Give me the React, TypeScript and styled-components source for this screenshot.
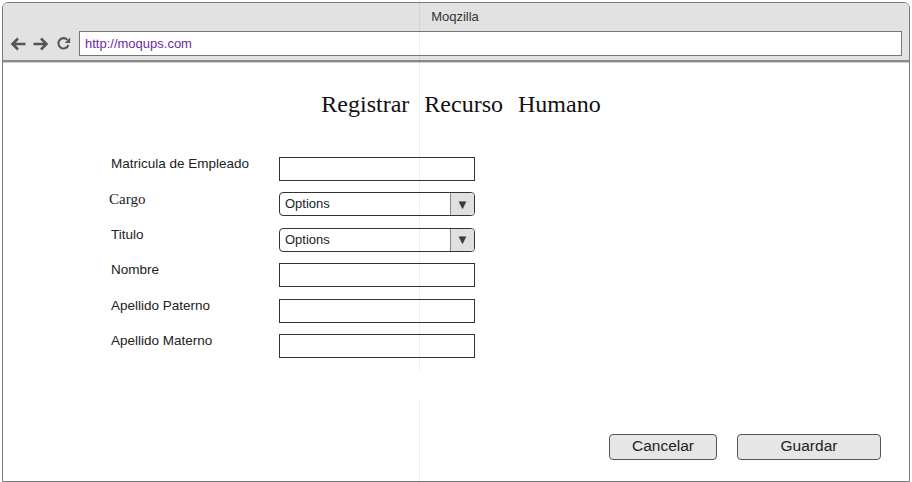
import styled, { createGlobalStyle } from "styled-components";

const GlobalStyle = createGlobalStyle`
  html, body {
    margin: 0;
    padding: 0;
    background: #ffffff;
  }
  body {
    font-family: "Liberation Sans", Arial, sans-serif;
    color: #222;
  }
`;

const Page = styled.div`
  position: relative;
  width: 912px;
  height: 482px;
  padding: 2px;
  box-sizing: border-box;
`;

const BrowserWindow = styled.div`
  height: 100%;
  border: 1px solid #7a7a7a;
  border-radius: 6px 6px 0 0;
  display: flex;
  flex-direction: column;
  overflow: hidden;
`;

const Header = styled.div`
  background: #e2e2e2;
  border-bottom: 2px solid #8a8a8a;
  box-shadow: 0 1px 0 #d0d0d0;
  padding: 0 7px 4px 5px;
  display: flex;
  flex-direction: column;
`;

const WindowTitle = styled.div`
  height: 28px;
  line-height: 28px;
  text-align: center;
  font-size: 13px;
  color: #333;
`;

const NavRow = styled.div`
  display: flex;
  align-items: center;
`;

const NavIcons = styled.div`
  display: flex;
  align-items: center;
  gap: 7px;
  width: 69px;
  padding-left: 2px;
  color: #555;
`;

const UrlBox = styled.div`
  flex: 1;
  height: 23px;
  background: #fff;
  border: 1px solid #777;
  display: flex;
  align-items: center;
  padding-left: 5px;
  font-size: 13px;
  color: #6b2aa8;
`;

const Content = styled.div`
  flex: 1;
  display: flex;
  flex-direction: column;
  padding: 29px 28px 21px 0;
`;

const PageTitle = styled.h1`
  margin: 0;
  text-align: center;
  padding-left: 38px;
  font-family: "Liberation Serif", "DejaVu Serif", serif;
  font-weight: normal;
  font-size: 24px;
  line-height: 26px;
  word-spacing: 9px;
  color: #111;
`;

const Form = styled.div`
  margin-top: 40px;
  margin-left: 108px;
  display: grid;
  grid-template-columns: 168px 196px;
  row-gap: 11.4px;
  align-items: start;
`;

const Label = styled.div<{ $serif?: boolean }>`
  font-family: ${(p) =>
    p.$serif
      ? `"Liberation Serif", "DejaVu Serif", serif`
      : `"Liberation Sans", Arial, sans-serif`};
  font-size: ${(p) => (p.$serif ? "15px" : "13.5px")};
  line-height: ${(p) => (p.$serif ? "14px" : "13px")};
  margin-left: ${(p) => (p.$serif ? "-2px" : "0")};
  color: #222;
`;

const TextInput = styled.div`
  height: 24px;
  box-sizing: border-box;
  border: 1px solid #333;
  background: #fff;
`;

const Select = styled.div`
  height: 24px;
  box-sizing: border-box;
  border: 1px solid #333;
  border-radius: 4px;
  background: #fff;
  display: flex;
  align-items: stretch;
  overflow: hidden;
`;

const SelectText = styled.div`
  flex: 1;
  padding-left: 5px;
  font-size: 13px;
  line-height: 22px;
  color: #222;
`;

const SelectArrow = styled.div`
  width: 23px;
  background: #e0e0e0;
  border-left: 1px solid #888;
  display: flex;
  align-items: center;
  justify-content: center;
  font-size: 13px;
  color: #3a3a3a;
`;

const Actions = styled.div`
  margin-top: auto;
  display: flex;
  justify-content: flex-end;
  gap: 20px;
`;

const ActionButton = styled.button<{ $width: number }>`
  width: ${(p) => p.$width}px;
  height: 26px;
  box-sizing: border-box;
  border: 1px solid #555;
  border-radius: 4px;
  background: #e6e6e6;
  font-family: "Liberation Sans", Arial, sans-serif;
  font-size: 15.5px;
  color: #222;
  padding: 0 0 3px;
  line-height: 20px;
`;

const Guide = styled.div<{ $top: number; $height: number }>`
  position: absolute;
  left: 419px;
  top: ${(p) => p.$top}px;
  width: 1px;
  height: ${(p) => p.$height}px;
  background: rgba(0, 0, 0, 0.06);
  pointer-events: none;
`;

const BackIcon = () => (
  <svg width="16" height="14" viewBox="0 0 16 14">
    <path d="M15.5 7H3M8 1.5L2.5 7 8 12.5" fill="none" stroke="currentColor" strokeWidth="2.6" />
  </svg>
);

const ForwardIcon = () => (
  <svg width="16" height="14" viewBox="0 0 16 14">
    <path d="M0.5 7h12M8 1.5L13.5 7 8 12.5" fill="none" stroke="currentColor" strokeWidth="2.6" />
  </svg>
);

const ReloadIcon = () => (
  <svg width="15" height="15" viewBox="0 0 14 14">
    <path d="M11.6 8.4A4.8 4.8 0 1 1 10.6 3.6" fill="none" stroke="currentColor" strokeWidth="2" />
    <path d="M13.2 1.4v5.2H8.2z" fill="currentColor" />
  </svg>
);

const fields: { label: string; kind: "text" | "select"; serif?: boolean }[] = [
  { label: "Matricula de Empleado", kind: "text" },
  { label: "Cargo", kind: "select", serif: true },
  { label: "Titulo", kind: "select" },
  { label: "Nombre", kind: "text" },
  { label: "Apellido Paterno", kind: "text" },
  { label: "Apellido Materno", kind: "text" },
];

const App = () => {
  return (
    <>
      <GlobalStyle />
      <Page>
        <BrowserWindow>
          <Header>
            <WindowTitle>Moqzilla</WindowTitle>
            <NavRow>
              <NavIcons>
                <BackIcon />
                <ForwardIcon />
                <ReloadIcon />
              </NavIcons>
              <UrlBox>http://moqups.com</UrlBox>
            </NavRow>
          </Header>
          <Content>
            <PageTitle>Registrar Recurso Humano</PageTitle>
            <Form>
              {fields.map((f) => [
                <Label key={f.label} $serif={f.serif}>
                  {f.label}
                </Label>,
                f.kind === "text" ? (
                  <TextInput key={f.label + "-input"} />
                ) : (
                  <Select key={f.label + "-select"}>
                    <SelectText>Options</SelectText>
                    <SelectArrow>▼</SelectArrow>
                  </Select>
                ),
              ])}
            </Form>
            <Actions>
              <ActionButton $width={108}>Cancelar</ActionButton>
              <ActionButton $width={144}>Guardar</ActionButton>
            </Actions>
          </Content>
        </BrowserWindow>
        <Guide $top={0} $height={370} />
        <Guide $top={400} $height={82} />
      </Page>
    </>
  );
};

export default App;
